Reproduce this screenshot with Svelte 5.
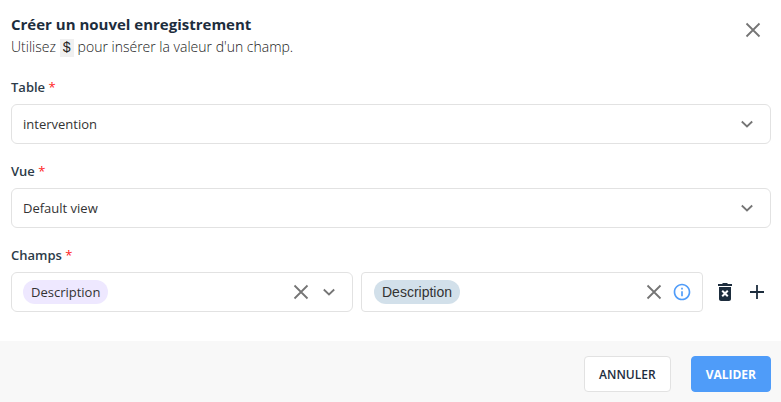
<script lang="ts">
    let table = $state("intervention");
    let view = $state("Default view");
    let field = $state("Description");
    let value = $state("Description");
</script>

{#snippet cross()}
    <svg
        class="line"
        width="24"
        height="24"
        viewBox="0 0 24 24"
        aria-hidden="true"
    >
        <path d="M5.5 5.5l13 13M18.5 5.5l-13 13" />
    </svg>
{/snippet}

{#snippet chevron()}
    <svg
        class="line"
        width="24"
        height="24"
        viewBox="0 0 24 24"
        aria-hidden="true"
    >
        <path d="M6.8 9.5 12 14.500l5.2-5" />
    </svg>
{/snippet}

<form class="dialog" onsubmit={(e) => e.preventDefault()}>
    <header>
        <div>
            <h1>Créer un nouvel enregistrement</h1>
            <p>Utilisez <code>$</code> pour insérer la valeur d'un champ.</p>
        </div>
        <button type="button" class="icon close" aria-label="Fermer">
            {@render cross()}
        </button>
    </header>

    <div class="content">
        <div class="group">
            <label for="table">Table <span class="required">*</span></label>
            <div class="box">
                <select id="table" bind:value={table} required>
                    <option>intervention</option>
                </select>
                {@render chevron()}
            </div>
        </div>

        <div class="group">
            <label for="view">Vue <span class="required">*</span></label>
            <div class="box">
                <select id="view" bind:value={view} required>
                    <option>Default view</option>
                </select>
                {@render chevron()}
            </div>
        </div>

        <div class="group">
            <label for="field">Champs <span class="required">*</span></label>
            <div class="row">
                <div class="box field">
                    {#if field}
                        <span class="chip">{field}</span>
                    {/if}
                    <input id="field" type="text" autocomplete="off" />
                    <button
                        type="button"
                        class="icon"
                        aria-label="Effacer le champ"
                        onclick={() => (field = "")}
                    >
                        {@render cross()}
                    </button>
                    <button type="button" class="icon" aria-label="Ouvrir">
                        {@render chevron()}
                    </button>
                </div>
                <div class="box value">
                    {#if value}
                        <span class="chip blue">{value}</span>
                    {/if}
                    <input type="text" aria-label="Valeur" autocomplete="off" />
                    <button
                        type="button"
                        class="icon"
                        aria-label="Effacer la valeur"
                        onclick={() => (value = "")}
                    >
                        {@render cross()}
                    </button>
                    <button type="button" class="icon info" aria-label="Aide">
                        <svg width="20" height="20" viewBox="0 0 24 24" aria-hidden="true">
                            <path
                                d="M11 7h2v2h-2zm0 4h2v6h-2zm1-9C6.48 2 2 6.48 2 12s4.48 10 10 10 10-4.48 10-10S17.52 2 12 2zm0 18c-4.41 0-8-3.59-8-8s3.59-8 8-8 8 3.59 8 8-3.59 8-8 8z"
                            />
                        </svg>
                    </button>
                </div>
                <div class="actions">
                    <button type="button" class="icon" aria-label="Supprimer">
                        <svg width="24" height="24" viewBox="0 0 24 24" aria-hidden="true">
                            <path
                                fill-rule="evenodd"
                                d="M5 4h4l1-1h4l1 1h4v2H5zM6 7h12v12c0 1.1-.9 2-2 2H8c-1.1 0-2-.9-2-2zm3.9 3-1.4 1.4 2.1 2.1-2.1 2.1L9.9 17l2.1-2.1 2.1 2.1 1.4-1.4-2.1-2.1 2.1-2.1L14.1 10 12 12.1z"
                            />
                        </svg>
                    </button>
                    <button type="button" class="icon" aria-label="Ajouter">
                        <svg
                            class="line"
                            width="24"
                            height="24"
                            viewBox="0 0 24 24"
                            aria-hidden="true"
                        >
                            <path d="M12 5v14M5 12h14" />
                        </svg>
                    </button>
                </div>
            </div>
        </div>
    </div>

    <footer>
        <button type="button" class="btn">ANNULER</button>
        <button type="submit" class="btn primary">VALIDER</button>
    </footer>
</form>

<style>
    :global(body) {
        margin: 0;
        background: #fff;
    }
    .dialog {
        font-family: "Segoe UI", "Open Sans", sans-serif;
        font-size: 13px;
        line-height: 20px;
        color: #333;
    }
    header {
        display: flex;
        align-items: flex-start;
        justify-content: space-between;
        padding: 13px 14px 0 11px;
    }
    h1 {
        margin: 0;
        font-size: 15px;
        line-height: 22px;
        font-weight: 700;
        color: #1d2d3d;
    }
    p {
        margin: 0;
        font-size: 14px;
        font-weight: 300;
        line-height: 24px;
        color: #222;
    }
    code {
        display: inline-block;
        padding: 0 3px;
        font-family: "Liberation Mono", monospace;
        line-height: 18px;
        background: #f0f0f0;
    }
    .content {
        display: flex;
        flex-direction: column;
        gap: 17px;
        padding: 18px 10px 29px 11px;
    }
    .group {
        display: flex;
        flex-direction: column;
        gap: 7px;
    }
    label {
        font-weight: 600;
        color: #2c3b49;
    }
    .required {
        font-weight: 400;
        color: #f22;
    }
    .box {
        display: flex;
        align-items: center;
        box-sizing: border-box;
        min-width: 0;
        min-height: 40px;
        padding: 0 11px;
        border: 1px solid #e2e2e2;
        border-radius: 6px;
        background: #fff;
        color: #757575;
    }
    select,
    input {
        flex: 1;
        min-width: 0;
        padding: 0;
        border: none;
        outline: none;
        appearance: none;
        background: none;
        font: inherit;
        color: #333;
    }
    .row {
        display: grid;
        grid-template-columns: 1fr 1fr auto;
        align-items: center;
        gap: 8px;
    }
    .field {
        padding-right: 9px;
    }
    .value {
        padding: 0 6px 0 12px;
        border-radius: 4px;
    }
    .chip {
        padding: 0 8px;
        border-radius: 12px;
        line-height: 24px;
        color: #333;
        background: #eee8ff;
    }
    .chip.blue {
        font-family: "Liberation Sans", sans-serif;
        font-size: 14px;
        background: #d2e0ea;
    }
    .icon {
        display: flex;
        align-items: center;
        justify-content: center;
        width: 28px;
        height: 28px;
        padding: 0;
        border: none;
        background: none;
        color: inherit;
        cursor: pointer;
    }
    .close {
        height: 34px;
        color: #757575;
    }
    .info {
        color: #4f9cf9;
    }
    svg {
        flex: none;
        fill: currentColor;
    }
    .line {
        fill: none;
        stroke: currentColor;
        stroke-width: 1.8;
    }
    .actions {
        display: flex;
        gap: 4px;
        color: #1d2d3d;
    }
    footer {
        display: flex;
        justify-content: flex-end;
        gap: 20px;
        padding: 15px 10px 10px;
        background: #f8f8f8;
    }
    .btn {
        height: 36px;
        padding: 0 14px;
        border: 1px solid #e2e2e2;
        border-radius: 4px;
        background: #fff;
        color: #1d2d3d;
        font-family: inherit;
        font-size: 12px;
        font-weight: 600;
        cursor: pointer;
    }
    .primary {
        border-color: #4f9cf9;
        background: #4f9cf9;
        color: #fff;
        font-weight: 700;
    }
</style>
